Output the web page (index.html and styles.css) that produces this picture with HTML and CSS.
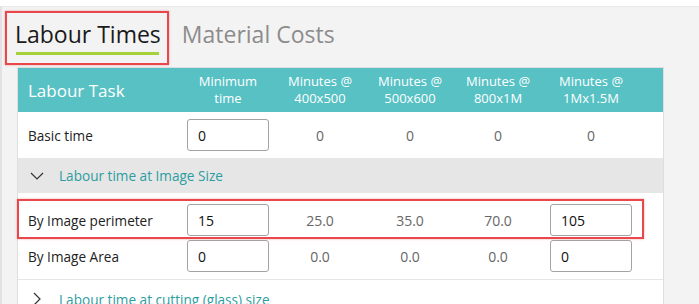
FILE: index.html
```html
<!DOCTYPE html>
<html lang="en">
<head>
    <meta charset="UTF-8">
    <meta name="viewport" content="width=device-width, initial-scale=1.0">
    <title>Labour Times</title>
    <link rel="stylesheet" href="styles.css">
</head>
<body>
    <div class="panel">
        <div class="tabs">
            <div class="tab active"><span>Labour Times</span></div>
            <div class="tab">Material Costs</div>
        </div>

        <div class="table">
            <div class="row head">
                <div class="label">Labour Task</div>
                <div class="cell">Minimum<br>time</div>
                <div class="cell">Minutes @<br>400x500</div>
                <div class="cell">Minutes @<br>500x600</div>
                <div class="cell">Minutes @<br>800x1M</div>
                <div class="cell">Minutes @<br>1Mx1.5M</div>
            </div>

            <div class="row basic">
                <div class="label">Basic time</div>
                <div class="cell"><input type="text" value="0"></div>
                <div class="cell value">0</div>
                <div class="cell value">0</div>
                <div class="cell value">0</div>
                <div class="cell value">0</div>
            </div>

            <div class="group open">
                <svg class="chevron" width="14" height="14" viewBox="0 0 14 14"><polyline points="1,4 7,10 13,4" /></svg>
                <span>Labour time at Image Size</span>
            </div>

            <div class="items">
                <div class="row item">
                    <div class="label">By Image perimeter</div>
                    <div class="cell"><input type="text" value="15"></div>
                    <div class="cell value">25.0</div>
                    <div class="cell value">35.0</div>
                    <div class="cell value">70.0</div>
                    <div class="cell"><input type="text" value="105"></div>
                </div>
                <div class="row item">
                    <div class="label">By Image Area</div>
                    <div class="cell"><input type="text" value="0"></div>
                    <div class="cell value">0.0</div>
                    <div class="cell value">0.0</div>
                    <div class="cell value">0.0</div>
                    <div class="cell"><input type="text" value="0"></div>
                </div>
                <div class="mark"></div>
            </div>

            <div class="group">
                <svg class="chevron" width="14" height="14" viewBox="0 0 14 14"><polyline points="4,1 10,7 4,13" /></svg>
                <span>Labour time at cutting (glass) size</span>
            </div>
        </div>
    </div>
</body>
</html>
```

FILE: styles.css
```css
body {
    margin: 0;
    background-color: #fff;
    font-family: "Open Sans", "Liberation Sans", sans-serif;
    overflow: hidden;
}

.panel {
    margin-top: 6px;
    border-top: 1px solid #e9e9e9;
    border-left: 2px solid #e2e2e2;
    background-color: #f3f3f3;
    height: 297px;
    padding: 4px 0 0 3px;
}

.tabs {
    display: flex;
    align-items: flex-start;
    gap: 3px;
    height: 56px;
}

.tab {
    border: 2px solid transparent;
    padding: 6px 6px 0 8px;
    height: 44px;
    font-size: 23px;
    line-height: 30px;
    color: #8c8c8c;
}

.tab.active {
    color: #1a1a1a;
    border-color: #e8474c;
    box-shadow: 0 0 2px rgba(232, 71, 76, 0.5);
}

.tab.active span {
    display: block;
}

.tab.active span::after {
    content: "";
    display: block;
    width: 143px;
    height: 3px;
    margin: 3px 0 0 1px;
    background-color: #a5d13a;
}

.table {
    margin-left: 12px;
    width: 645px;
    background-color: #fff;
    border: 1px solid #dedede;
}

.row {
    display: grid;
    grid-template-columns: 164px 92px 92px 88px 88px 98px;
    align-items: center;
}

.label {
    padding-left: 10px;
    font-size: 13.6px;
    color: #222;
}

.cell {
    text-align: center;
    font-size: 14px;
}

.head {
    height: 44px;
    background-color: #57c1c4;
    color: #fff;
}

.head .label {
    font-size: 17px;
    color: #fff;
}

.head .cell {
    font-size: 13px;
    line-height: 17px;
}

.basic {
    height: 46px;
}

.value {
    color: #666;
}

input {
    box-sizing: border-box;
    width: 82px;
    height: 32px;
    border: 1px solid #a3a3a3;
    border-radius: 3px;
    padding: 0 0 0 10px;
    font-family: inherit;
    font-size: 14px;
    color: #111;
    display: block;
    margin: 0 auto;
}

.group {
    display: flex;
    align-items: center;
    height: 35px;
    padding-left: 12px;
    font-size: 13.6px;
    color: #2c9da1;
}

.group.open {
    background-color: #e6e6e6;
}

.chevron {
    fill: none;
    stroke: #333;
    stroke-width: 1.2;
    margin-right: 15px;
}

.items {
    position: relative;
    padding: 9px 0 5px 0;
    border-bottom: 1px solid #e6e6e6;
}

.item {
    height: 36px;
}

.mark {
    position: absolute;
    top: 6px;
    left: -1px;
    width: 623px;
    height: 36px;
    border: 2px solid #e8474c;
    box-shadow: 0 0 2px rgba(232, 71, 76, 0.5);
}

.group:last-child {
    height: 38px;
}
```
